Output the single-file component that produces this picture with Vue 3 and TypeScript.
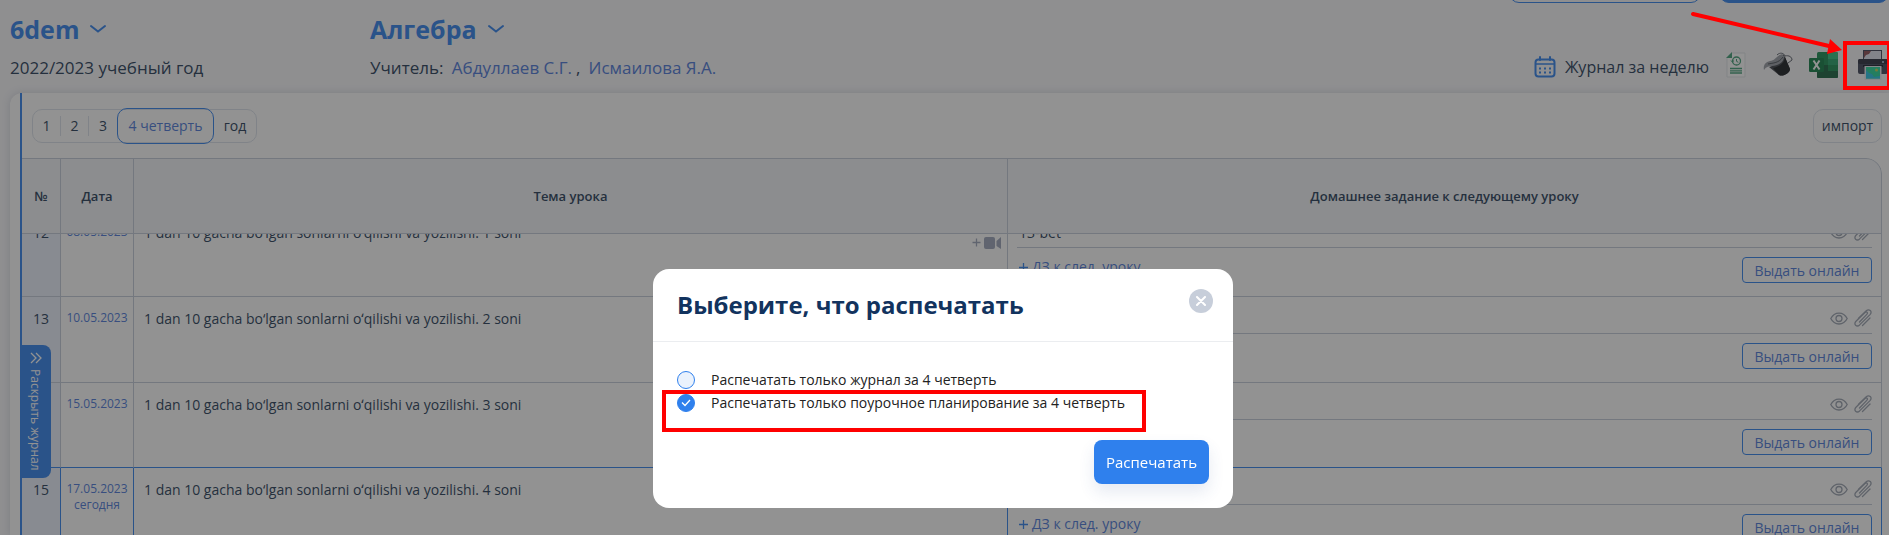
<script setup lang="ts">
import { onMounted, ref } from 'vue'

interface Lesson {
  num: number
  date: string
  topic: string
  homework: string
  today?: boolean
}

const lessons: Lesson[] = [
  { num: 12, date: '08.05.2023', topic: '1 dan 10 gacha bo‘lgan sonlarni oʻqilishi va yozilishi. 1 soni', homework: '13-bet' },
  { num: 13, date: '10.05.2023', topic: '1 dan 10 gacha bo‘lgan sonlarni oʻqilishi va yozilishi. 2 soni', homework: '' },
  { num: 14, date: '15.05.2023', topic: '1 dan 10 gacha bo‘lgan sonlarni oʻqilishi va yozilishi. 3 soni', homework: '' },
  { num: 15, date: '17.05.2023', topic: '1 dan 10 gacha bo‘lgan sonlarni oʻqilishi va yozilishi. 4 soni', homework: '', today: true },
]
const periods = ['1', '2', '3', '4 четверть', 'год']
const period = ref('4 четверть')
const choice = ref('plan')
const scroller = ref<HTMLElement | null>(null)

onMounted(() => {
  if (scroller.value) scroller.value.scrollTop = 23
})
</script>

<template>
  <div class="page">
    <div class="strip" aria-hidden="true">
      <span class="pill outline"></span>
      <span class="pill solid"></span>
    </div>

    <header class="head">
      <div class="group class-group">
        <button class="picker" type="button">
          6dem
          <svg width="18" height="10" viewBox="0 0 18 10"><path d="M2 2l7 5.5L16 2" /></svg>
        </button>
        <p>2022/2023 учебный год</p>
      </div>
      <div class="group">
        <button class="picker" type="button">
          Алгебра
          <svg width="18" height="10" viewBox="0 0 18 10"><path d="M2 2l7 5.5L16 2" /></svg>
        </button>
        <p class="teachers">Учитель: <a href="#">Абдуллаев С.Г.</a><span>,</span><a href="#">Исмаилова Я.А.</a></p>
      </div>
      <div class="tools">
        <a href="#" class="week">
          <svg width="22" height="22" viewBox="0 0 22 22" fill="none" stroke="#2f80ed" stroke-width="2">
            <rect x="1.5" y="3.5" width="19" height="17" rx="3" />
            <path d="M2 8h18" stroke-width="1.5" />
            <path d="M6 1v3M16 1v3" stroke-linecap="round" />
            <path d="M5 12.500h2M10 12.500h2M15 12.500h2M5 16.500h2M10 16.500h2M15 16.500h2" />
          </svg>
          Журнал за неделю
        </a>
        <button type="button" class="tool" aria-label="История">
          <svg width="22" height="28" viewBox="0 0 22 28">
            <path d="M7 2h13v24H2V7z" fill="#ffffff" stroke="#dfe3e6" />
            <path d="M1 7l6-6v6z" fill="#3f9c74" />
            <circle cx="11.500" cy="10" r="4" fill="none" stroke="#3f9c74" stroke-width="1.300" />
            <path d="M11.500 8v2.300l1.800 1M6 9.500l1.400 1.600L9 9.500" fill="none" stroke="#3f9c74" />
            <path d="M5 17.500h12M5 19.800h12M5 22h12" stroke="#3f9c74" stroke-width="1.300" />
          </svg>
        </button>
        <button type="button" class="tool" aria-label="Заливка">
          <svg width="30" height="26" viewBox="0 0 30 26">
            <path d="M9 14C12 6 17 2 21 3l6 14c0 4-7 8-11 6L6 15z" fill="#3b3f46" />
            <path d="M16 23c4 2 11-2 11-6L22 5c0 5-4 9-12 11z" fill="#15181c" />
            <path d="M1 18c-1-4 1-8 6-9 4 0 6-4 10-6 2-1 4 0 4 2 0 5-6 9-12 9-4 0-6 1-8 4z" fill="#969ba3" />
            <path d="M5 12c5-1 11-1 15-7" fill="none" stroke="#4a4f57" />
            <path d="M14 3c3-3 7-2 8 1 4-1 7 1 7 4l-4 3" fill="none" stroke="#5a5f68" />
          </svg>
        </button>
        <button type="button" class="tool" aria-label="Excel">
          <svg width="30" height="26" viewBox="0 0 30 26">
            <rect x="8" width="21" height="26" rx="1.500" fill="#168a4e" />
            <path d="M19 0h8.500A1.500 1.500 0 0 1 29 1.500V7H19z" fill="#2fbf7c" />
            <path d="M19 7h10v6H19z" fill="#22a066" />
            <path d="M8 13h11v13H9.500A1.500 1.500 0 0 1 8 24.500z" fill="#14603c" />
            <path d="M19 19h10v5.500a1.500 1.500 0 0 1-1.500 1.500H19z" fill="#14603c" />
            <rect y="6" width="15" height="14" rx="1.200" fill="#0f7a43" />
            <path d="M4.500 8.500l6 9M10.500 8.500l-6 9" stroke="#fff" stroke-width="2" />
          </svg>
        </button>
        <button type="button" class="tool print" aria-label="Печать">
          <svg width="30" height="30" viewBox="0 0 30 30">
            <rect x="5.500" y=".5" width="18" height="12" fill="#dfe3ee" stroke="#3c4054" />
            <path d="M6 1h7l-2 3-3 1-2 3z" fill="#8b4a50" />
            <rect y="9" width="30" height="15" rx="2" fill="#3d4256" />
            <rect y="9" width="30" height="5" rx="2" fill="#262a3a" />
            <circle cx="25" cy="12" r="1" fill="#b7c6e6" />
            <path d="M5 15h20v2H5z" fill="#171a28" />
            <rect x="6.500" y="16" width="17" height="14" fill="#e4e8ef" />
            <rect x="8" y="17" width="14" height="11.500" fill="#22d69a" />
            <path d="M8 20l3 3 3 1 2 3 6-1v2.500H8z" fill="#25c3e6" />
            <circle cx="18.500" cy="20" r="1.500" fill="#c9cf4a" />
          </svg>
          <span class="mark-tool" aria-hidden="true">
            <svg class="arrow" width="152" height="46" viewBox="0 0 152 46">
              <path d="M2 3L138 35" stroke="#ff0000" stroke-width="4" stroke-linecap="round" />
              <path d="M139 28l12 11-15 4z" fill="#ff0000" />
            </svg>
          </span>
        </button>
      </div>
    </header>

    <main class="panel">
      <div class="journal">
        <div class="bar">
          <div class="periods">
            <button
              v-for="p in periods"
              :key="p"
              type="button"
              :class="{ active: p === period }"
              @click="period = p"
            >{{ p }}</button>
          </div>
          <button type="button" class="import">импорт</button>
        </div>

        <div ref="scroller" class="scroller">
          <table>
            <colgroup>
              <col class="c-num" /><col class="c-date" /><col /><col />
            </colgroup>
            <thead>
              <tr>
                <th scope="col">№</th>
                <th scope="col">Дата</th>
                <th scope="col">Тема урока</th>
                <th scope="col">Домашнее задание к следующему уроку</th>
              </tr>
            </thead>
            <tbody>
              <tr v-for="(l, i) in lessons" :key="l.num" :class="{ today: l.today, before: lessons[i + 1]?.today }">
                <td class="num">{{ l.num }}</td>
                <td class="date"><a href="#">{{ l.date }}<template v-if="l.today"><br />сегодня</template></a></td>
                <td class="topic">
                  <div class="topic-text">{{ l.topic }}</div>
                  <button type="button" class="video" aria-label="Добавить видео">
                    <svg width="29" height="12" viewBox="0 0 29 12">
                      <path d="M4.500 1.500v8M.5 5.500h8" stroke="#9aa3b8" stroke-width="1.300" />
                      <rect x="12" y="0" width="11" height="12" rx="2" fill="#9aa3b8" />
                      <path d="M24.500 4L29 0v12l-4.500-3z" fill="#9aa3b8" />
                    </svg>
                  </button>
                </td>
                <td class="hw">
                  <div class="hw-line">
                    <input :value="l.homework" type="text" aria-label="Домашнее задание" />
                    <svg width="18" height="13" viewBox="0 0 18 13" fill="none" stroke="#98a0ae" stroke-width="1.300">
                      <path d="M.8 6.500C4.500-.8 13.500-.8 17.200 6.500 13.500 13.800 4.500 13.800.8 6.500z" />
                      <circle cx="9" cy="6.500" r="3" />
                    </svg>
                    <svg width="18" height="18" viewBox="0 0 18 18" fill="none" stroke="#98a0ae" stroke-width="1.300" stroke-linecap="round">
                      <path d="M5.500 13l7.300-7.600c1.600-1.600-.2-3.500-1.800-1.900L2 12.300c-3 3 .8 6.200 3.600 3.600L16 5.600C19 2.400 15 -.8 12 2L4.500 9.200" />
                      <path d="M8.500 16.500L16 9" />
                    </svg>
                  </div>
                  <div class="hw-actions">
                    <a href="#"><svg width="9" height="9" viewBox="0 0 9 9"><path d="M4.500 0v9M0 4.500h9" stroke="#2f80ed" stroke-width="1.300" /></svg>ДЗ к след. уроку</a>
                    <button type="button">Выдать онлайн</button>
                  </div>
                </td>
              </tr>
            </tbody>
          </table>
        </div>

        <button type="button" class="expand">
          <svg width="12" height="12" viewBox="0 0 12 12" fill="none" stroke="#fff" stroke-width="1.300"><path d="M1 1l5 5-5 5M6 1l5 5-5 5" /></svg>
          Раскрыть журнал
        </button>
      </div>
    </main>

    <div class="overlay">
      <section class="dialog" role="dialog" aria-labelledby="dlg-title">
        <div class="dialog-head">
          <h2 id="dlg-title">Выберите, что распечатать</h2>
          <button type="button" class="close" aria-label="Закрыть">
            <svg width="10" height="10" viewBox="0 0 10 10"><path d="M1 1l8 8M9 1L1 9" stroke="#fff" stroke-width="2" stroke-linecap="round" /></svg>
          </button>
        </div>
        <div class="options">
          <label><input v-model="choice" type="radio" name="print" value="journal" /><span>Распечатать только журнал за 4 четверть</span></label>
          <label>
            <input v-model="choice" type="radio" name="print" value="plan" /><span>Распечатать только поурочное планирование за 4 четверть</span>
            <svg class="tick" width="10" height="8" viewBox="0 0 10 8"><path d="M1 3.500L4 6.500 9 1" fill="none" stroke="#fff" stroke-width="1.300" /></svg>
          </label>
          <span class="mark-option" aria-hidden="true"></span>
        </div>
        <div class="dialog-foot"><button type="button">Распечатать</button></div>
      </section>
    </div>
  </div>
</template>

<style>
body {
  margin: 0;
  overflow: hidden;
}
</style>

<style scoped>
* {
  box-sizing: border-box;
}
.page {
  position: relative;
  display: flex;
  flex-direction: column;
  height: 100vh;
  overflow: hidden;
  background: #f8f8fb;
  color: #243a56;
  font-family: "Open Sans", "Noto Sans", sans-serif;
  font-size: 15px;
}
button {
  padding: 0;
  border: 0;
  background: none;
  color: inherit;
  font: inherit;
}
a {
  color: #4a77d8;
  text-decoration: none;
}
p, h2 {
  margin: 0;
}
svg {
  display: block;
  flex: none;
}
.strip {
  display: flex;
  flex: none;
  justify-content: flex-end;
  align-items: flex-end;
  gap: 18px;
  height: 3px;
  overflow: hidden;
}
.pill {
  flex: none;
  height: 40px;
  border: 1px solid #2f80ed;
  border-radius: 10px;
}
.outline {
  width: 192px;
}
.solid {
  width: 170px;
  background: #2f80ed;
}
.head {
  display: flex;
  flex: none;
  height: 90px;
  padding: 8px 0 0 10px;
}
.class-group {
  width: 360px;
}
.picker {
  display: flex;
  align-items: center;
  gap: 10px;
  height: 36px;
  color: #2f80ed;
  font-size: 25px;
  font-weight: 700;
}
.picker path {
  fill: none;
  stroke: #2f80ed;
  stroke-width: 2;
  stroke-linecap: round;
}
.group p {
  margin-top: 9px;
  font-size: 17px;
  line-height: 24px;
}
.teachers a {
  margin-left: 4px;
}
.teachers span {
  margin: 0 4px;
}
.tools {
  display: flex;
  align-items: center;
  gap: 16px;
  height: 42px;
  margin: 33px 1px 0 auto;
}
.week {
  display: flex;
  align-items: center;
  gap: 9px;
  padding-top: 4px;
  color: #243a56;
  font-size: 16px;
}
.tool {
  position: relative;
}
.print {
  margin-left: 3px;
}
.mark-tool {
  position: absolute;
  z-index: 20;
  top: -9px;
  left: -15px;
  width: 48px;
  height: 49px;
  border: 4px solid #ff0000;
}
.arrow {
  position: absolute;
  right: 44px;
  bottom: 29px;
}
.panel {
  flex: 1;
  min-height: 0;
  padding-left: 10px;
  margin-left: 10px;
  border-radius: 12px 0 0 0;
  background: #fff;
  box-shadow: 0 0 8px rgba(40, 60, 90, 0.18);
}
.journal {
  position: relative;
  display: flex;
  flex-direction: column;
  height: 100%;
  padding-right: 7px;
  border-left: 2px solid #2f80ed;
}
.bar {
  display: flex;
  flex: none;
  align-items: center;
  justify-content: space-between;
  height: 65px;
  padding-left: 10px;
}
.periods {
  display: flex;
  align-items: center;
  height: 34px;
  border: 1px solid #dbe1ea;
  border-radius: 10px;
}
.periods button {
  width: 28px;
  height: 20px;
  font-size: 14px;
  line-height: 20px;
}
.periods button:nth-child(-n + 2) {
  border-right: 1px solid #dbe1ea;
}
.periods button:last-child {
  width: 42px;
}
.periods .active {
  width: 97px;
  height: 36px;
  border: 1px solid #2f80ed;
  border-radius: 10px;
  color: #4a77d8;
}
.import {
  width: 69px;
  height: 34px;
  border: 1px solid #dbe1ea;
  border-radius: 10px;
  font-size: 14px;
}
.scroller {
  flex: 1;
  min-height: 0;
  overflow: auto;
  scrollbar-width: none;
  border-radius: 0 16px 0 0;
}
table {
  width: 100%;
  table-layout: fixed;
  border-collapse: separate;
  border-spacing: 0;
}
.c-num {
  width: 39px;
}
.c-date {
  width: 73px;
}
th {
  position: sticky;
  z-index: 2;
  top: 0;
  height: 76px;
  padding: 0;
  border: solid #c3cbd8;
  border-width: 1px 1px 1px 0;
  background: #f2f5f9;
  font-size: 13px;
  font-weight: 600;
}
th:last-child {
  border-radius: 0 16px 0 0;
}
td {
  height: 86px;
  padding: 0;
  border: solid #c3cbd8;
  border-width: 0 1px 1px 0;
  vertical-align: top;
}
.before td {
  height: 85px;
  border-bottom-color: #2f80ed;
}
.today td {
  border-right-color: #2f80ed;
}
.num {
  padding-top: 12px;
  background: #eaf1fc;
  font-size: 14px;
  line-height: 20px;
  text-align: center;
}
.date {
  padding-top: 13px;
  font-size: 12px;
  line-height: 16px;
  text-align: center;
}
.topic {
  padding: 12px 6px 0 10px;
}
.topic-text {
  height: 14px;
  font-size: 14px;
  line-height: 20px;
}
.video {
  display: block;
  margin-left: auto;
}
.hw {
  padding: 0 9px;
}
.hw-line {
  display: flex;
  align-items: center;
  gap: 6px;
  height: 37px;
  padding-top: 6px;
  border-bottom: 1px solid #c3cbd8;
}
.hw-line input {
  flex: 1;
  min-width: 0;
  padding: 0 0 0 2px;
  border: 0;
  background: none;
  color: inherit;
  font: inherit;
  font-size: 14px;
}
.hw-actions {
  display: flex;
  justify-content: space-between;
  align-items: flex-start;
  padding-top: 9px;
}
.hw-actions a {
  display: flex;
  align-items: center;
  gap: 4px;
  padding-left: 2px;
  font-size: 14px;
  line-height: 20px;
}
.hw-actions button {
  width: 130px;
  height: 26px;
  border: 1px solid #2f80ed;
  border-radius: 4px;
  color: #4a77d8;
  font-size: 14px;
}
.expand {
  position: absolute;
  z-index: 3;
  top: 252px;
  left: -2px;
  display: flex;
  align-items: center;
  gap: 5px;
  width: 31px;
  height: 133px;
  padding-top: 7px;
  border-radius: 0 8px 8px 0;
  background: #2f80ed;
  color: #fff;
  font-size: 12px;
  writing-mode: vertical-rl;
}
.overlay {
  position: absolute;
  z-index: 10;
  inset: 0;
  padding: 269px 3px 0 0;
  background: rgba(37, 37, 37, 0.5);
}
.dialog {
  width: 580px;
  margin: 0 auto;
  border-radius: 16px;
  background: #fff;
}
.dialog-head {
  display: flex;
  align-items: flex-start;
  justify-content: space-between;
  height: 73px;
  padding: 20px 20px 0 24px;
  border-bottom: 1px solid #ebedf0;
}
h2 {
  color: #12335e;
  font-size: 24px;
  font-weight: 700;
  line-height: 32px;
}
.close {
  display: grid;
  place-items: center;
  width: 24px;
  height: 24px;
  border-radius: 50%;
  background: #c7ceda;
}
.options {
  position: relative;
  padding: 26px 24px 0;
  color: #222;
  font-size: 14px;
}
label {
  position: relative;
  display: flex;
  align-items: center;
  gap: 16px;
  height: 23px;
}
label input {
  flex: none;
  width: 18px;
  height: 18px;
  margin: 0;
  border: 1px solid #2f80ed;
  border-radius: 50%;
  appearance: none;
  background: #eaf2fd;
}
label input:checked {
  background: #2f80ed;
}
.tick {
  position: absolute;
  top: 8px;
  left: 4px;
}
.mark-option {
  position: absolute;
  top: 48px;
  left: 9px;
  width: 484px;
  height: 42px;
  border: 4px solid #ff0000;
}
.dialog-foot {
  display: flex;
  justify-content: flex-end;
  padding: 26px 24px 24px;
}
.dialog-foot button {
  width: 115px;
  height: 44px;
  border-radius: 8px;
  background: #2f80ed;
  box-shadow: 0 8px 16px rgba(47, 80, 150, 0.12);
  color: #fff;
  font-size: 15px;
  font-weight: 500;
}
</style>
